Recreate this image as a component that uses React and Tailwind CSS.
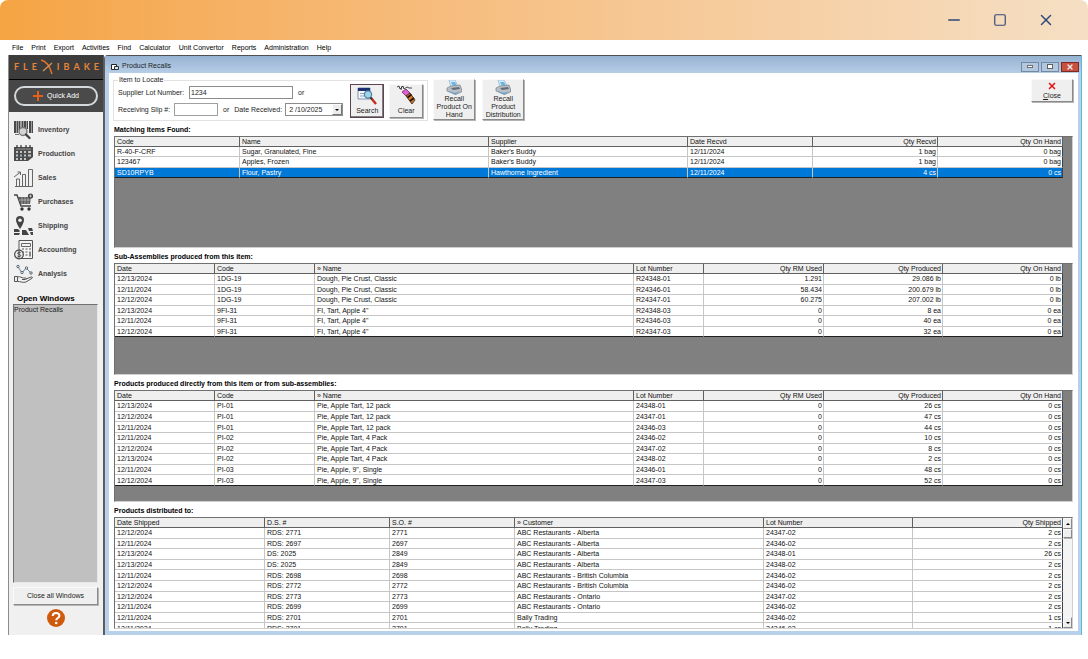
import { Minus, Square, X } from "lucide-react";

const menuItems = [
  "File",
  "Print",
  "Export",
  "Activities",
  "Find",
  "Calculator",
  "Unit Convertor",
  "Reports",
  "Administration",
  "Help",
];

const matchingItems = {
  columns: [
    { label: "Code", width: "w-[125px]" },
    { label: "Name", width: "w-[249px]" },
    { label: "Supplier" },
    { label: "Date Recvd", width: "w-[125px]" },
    { label: "Qty Recvd", width: "w-[125px]", right: true },
    { label: "Qty On Hand", width: "w-[125px]", right: true },
  ],
  rows: [
    ["R-40-F-CRF", "Sugar, Granulated, Fine", "Baker's Buddy", "12/11/2024", "1 bag", "0 bag"],
    ["123467", "Apples, Frozen", "Baker's Buddy", "12/11/2024", "1 bag", "0 bag"],
    ["SD10RPYB", "Flour, Pastry", "Hawthorne Ingredient", "12/11/2024", "4 cs", "0 cs"],
  ],
};

const productionColumns = [
  { label: "Date", width: "w-[100px]" },
  { label: "Code", width: "w-[100px]" },
  { label: "» Name" },
  { label: "Lot Number", width: "w-[70px]" },
  { label: "Qty RM Used", width: "w-[120px]", right: true },
  { label: "Qty Produced", width: "w-[119px]", right: true },
  { label: "Qty On Hand", width: "w-[120px]", right: true },
];

const subAssemblies = {
  columns: productionColumns,
  rows: [
    ["12/13/2024", "1DG-19", "Dough, Pie Crust, Classic", "R24348-01", "1.291", "29.086 lb", "0 lb"],
    ["12/11/2024", "1DG-19", "Dough, Pie Crust, Classic", "R24346-01", "58.434", "200.679 lb", "0 lb"],
    ["12/12/2024", "1DG-19", "Dough, Pie Crust, Classic", "R24347-01", "60.275", "207.002 lb", "0 lb"],
    ["12/13/2024", "9FI-31", "FI, Tart, Apple 4\"", "R24348-03", "0", "8 ea", "0 ea"],
    ["12/11/2024", "9FI-31", "FI, Tart, Apple 4\"", "R24346-03", "0", "40 ea", "0 ea"],
    ["12/12/2024", "9FI-31", "FI, Tart, Apple 4\"", "R24347-03", "0", "32 ea", "0 ea"],
  ],
};

const products = {
  columns: productionColumns,
  rows: [
    ["12/13/2024", "PI-01", "Pie, Apple Tart, 12 pack", "24348-01", "0", "26 cs", "0 cs"],
    ["12/12/2024", "PI-01", "Pie, Apple Tart, 12 pack", "24347-01", "0", "47 cs", "0 cs"],
    ["12/11/2024", "PI-01", "Pie, Apple Tart, 12 pack", "24346-03", "0", "44 cs", "0 cs"],
    ["12/11/2024", "PI-02", "Pie, Apple Tart, 4 Pack", "24346-02", "0", "10 cs", "0 cs"],
    ["12/12/2024", "PI-02", "Pie, Apple Tart, 4 Pack", "24347-02", "0", "8 cs", "0 cs"],
    ["12/13/2024", "PI-02", "Pie, Apple Tart, 4 Pack", "24348-02", "0", "2 cs", "0 cs"],
    ["12/11/2024", "PI-03", "Pie, Apple, 9\", Single", "24346-01", "0", "48 cs", "0 cs"],
    ["12/12/2024", "PI-03", "Pie, Apple, 9\", Single", "24347-03", "0", "52 cs", "0 cs"],
  ],
};

const distributed = {
  columns: [
    { label: "Date Shipped", width: "w-[150px]" },
    { label: "D.S. #", width: "w-[125px]" },
    { label: "S.O. #", width: "w-[125px]" },
    { label: "» Customer" },
    { label: "Lot Number", width: "w-[149px]" },
    { label: "Qty Shipped", width: "w-[150px]", right: true },
  ],
  rows: [
    ["12/12/2024", "RDS: 2771", "2771", "ABC Restaurants - Alberta", "24347-02", "2 cs"],
    ["12/11/2024", "RDS: 2697", "2697", "ABC Restaurants - Alberta", "24346-02", "2 cs"],
    ["12/13/2024", "DS: 2025", "2849", "ABC Restaurants - Alberta", "24348-01", "26 cs"],
    ["12/13/2024", "DS: 2025", "2849", "ABC Restaurants - Alberta", "24348-02", "2 cs"],
    ["12/11/2024", "RDS: 2698", "2698", "ABC Restaurants - British Columbia", "24346-02", "2 cs"],
    ["12/12/2024", "RDS: 2772", "2772", "ABC Restaurants - British Columbia", "24346-02", "2 cs"],
    ["12/12/2024", "RDS: 2773", "2773", "ABC Restaurants - Ontario", "24347-02", "2 cs"],
    ["12/11/2024", "RDS: 2699", "2699", "ABC Restaurants - Ontario", "24346-02", "2 cs"],
    ["12/11/2024", "RDS: 2701", "2701", "Bally Trading", "24346-02", "1 cs"],
    ["12/11/2024", "RDS: 2701", "2701", "Bally Trading", "24346-03", "1 cs"],
  ],
};

const InventoryIcon = () => (
  <svg viewBox="0 0 20 20" className="size-5">
    <g fill="#4a4a4a">
      <rect x="0" y="1" width="2" height="12" />
      <rect x="2.500" y="1" width="1.500" height="12" />
      <rect x="4.500" y="1" width="2" height="9" />
      <rect x="7.500" y="1" width="1.500" height="7" />
      <rect x="9.500" y="1" width="2.500" height="7" />
      <rect x="12.500" y="1" width="1.500" height="8" />
      <rect x="15" y="1" width="2" height="12" />
      <rect x="17.500" y="1" width="1.500" height="12" />
    </g>
    <path d="M1 14.500h4" stroke="#777" />
    <circle cx="9" cy="11.500" r="4" fill="#d4d4d4" stroke="#777" strokeWidth="1.400" />
    <path d="M12 14.500l3.500 3.500" stroke="#444" strokeWidth="2.400" strokeLinecap="round" />
  </svg>
);

const ProductionIcon = () => (
  <svg viewBox="0 0 20 20" className="size-5">
    <path d="M0 3h19v14H0z" fill="#4d4d4d" />
    <path d="M3 1v4M7 1v4M12 1v4M16 1v4" stroke="#333" strokeWidth="1.2" />
    <path d="M2 5h15" stroke="#999" />
    <path
      d="M2 7h2v2H2zM6 7h2v2H6zM10 7h2v2h-2zM14 7h3v2h-3zM2 10.500h2v2H2zM10 10.500h2v2h-2zM14 10.500h3v2h-3zM2 14h2v2H2zM6 14h2v2H6zM10 14h2v2h-2z"
      fill="#c4c4c4"
    />
    <path d="M6 10.500h2v2H6z" fill="#8fb2d0" />
    <path d="M14 17l5-4v4z" fill="#efefef" />
  </svg>
);

const SalesIcon = () => (
  <svg viewBox="0 0 20 20" className="size-5" fill="none" stroke="#666">
    <path d="M1 18.500h18M2.500 18v-7h3v7M8.500 18V6.500h3V18M14.500 18V1.500h4V18" />
    <path d="M0 9l6-4.500M3.500 4H6.500V7" />
  </svg>
);

const PurchasesIcon = () => (
  <svg viewBox="0 0 20 20" className="size-5">
    <path d="M0 3h3l4 11h10" fill="none" stroke="#444" strokeWidth="1.4" />
    <path d="M4 5h13l-1 7H6z" fill="#5c5c5c" />
    <path d="M8 5v7M11 5v7M14 5v7M5 8h12" stroke="#ccc" strokeWidth=".6" />
    <circle cx="16.500" cy="4" r="2.600" fill="#444" />
    <path d="M15 4h3M16.500 2.500v3" stroke="#ddd" strokeWidth=".7" />
    <circle cx="8" cy="17" r="1.700" fill="#333" />
    <circle cx="15" cy="17" r="1.700" fill="#333" />
  </svg>
);

const ShippingIcon = () => (
  <svg viewBox="0 0 20 20" className="size-5">
    <path d="M0 13h4l2 2-1 1H0zM0 17h6l-1 2H0zM8 14h4l3 5H8zM14 12h4l1 3h-4zM16 16h3v3h-2z" fill="#444" />
    <path d="M6 0a4 4 0 0 1 4 4c0 3-4 9-4 9S2 7 2 4a4 4 0 0 1 4-4z" fill="#444" />
    <circle cx="6" cy="4.200" r="1.800" fill="#f0f0f0" />
  </svg>
);

const AccountingIcon = () => (
  <svg viewBox="0 0 20 20" className="size-5">
    <path d="M5 .5h13.500v18H5z" fill="#f4f4f4" stroke="#555" />
    <path d="M7.500 3.500h9v3h-9z" fill="none" stroke="#666" />
    <path d="M8 9h2M11.500 9h2M15 9h2M8 12h2M11.500 12h2M11.500 15h2" stroke="#555" />
    <path d="M15 11.500h2v5h-2z" fill="#888" />
    <circle cx="5" cy="14.500" r="4.300" fill="#efefef" stroke="#444" strokeWidth="1.200" />
    <path
      d="M6.700 12.700c-1-1-3.200-.5-3 .7.200 1.200 3 .8 3 2.200 0 1.200-2.400 1.400-3.300.4M5 11.200v6.600"
      fill="none"
      stroke="#333"
      strokeWidth=".9"
    />
  </svg>
);

const AnalysisIcon = () => (
  <svg viewBox="0 0 20 20" className="size-5" fill="none">
    <path d="M4 3l4 6 4-5 5 5" stroke="#6c7c8a" />
    <g fill="#f0f0f0" stroke="#4f6577">
      <circle cx="4" cy="2.500" r="1.200" />
      <circle cx="8" cy="8.500" r="1.200" />
      <circle cx="12.500" cy="4" r="1.200" />
      <circle cx="17" cy="9" r="1.200" />
    </g>
    <path
      d="M.5 12.500h3v5h-3zM3.500 13c3-1 4 1 6 1h2c1 0 1 1.500 0 1.500H8M12 15l5-2c1.500-.3 2 .7 1 1.300L12 18c-3 1-6-.5-8.500-.7"
      stroke="#555"
    />
  </svg>
);

const SearchIcon = () => (
  <svg viewBox="0 0 20 18" className="h-[18px] w-5">
    <path d="M1 1h12v11H1z" fill="#f4f8fc" stroke="#7d93ad" />
    <path d="M1 1h12v3H1z" fill="#1b2f72" />
    <path d="M3 6.500h7M3 9h5" stroke="#94a4b8" />
    <circle cx="11" cy="7.500" r="3.600" fill="#9fd4ee" stroke="#4f7f9c" strokeWidth="1.200" />
    <path d="M14 11l5 6" stroke="#c62a1c" strokeWidth="2.400" />
    <path d="M13.500 10.500l1.500 1.500" stroke="#333" strokeWidth="2" />
  </svg>
);

const ClearIcon = () => (
  <svg viewBox="0 0 20 20" className="size-5">
    <path d="M1 2l2-1 1 3 3-3 1 3 3-2 2 1 3 0M5 5l1-4" fill="none" stroke="#333" strokeWidth=".9" />
    <path d="M6 7l4-3 4 4-4 3z" fill="#dd5fd0" stroke="#6b2266" strokeWidth=".8" />
    <path d="M14 8l5 7-3 4-6-8z" fill="#d07a2c" stroke="#40220c" strokeWidth=".8" />
    <path d="M11.500 12.500l4-3M14 16l4-3" stroke="#1d120a" strokeWidth="1.600" />
  </svg>
);

const PrinterIcon = () => (
  <svg viewBox="0 0 16 15" className="h-[15px] w-4">
    <path d="M3 0l6-0 3 6-7 1z" fill="#d5ecfa" stroke="#8db6d2" strokeWidth=".7" />
    <path d="M5 2l4 0 1.500 3-4 .5z" fill="#6cb4e2" />
    <path d="M1 8l4-2 9-1 1.500 4v3l-6 2.500L1 11z" fill="#b9bfc6" stroke="#777f88" strokeWidth=".7" />
    <path d="M5 8l8-1 1 2-7 1z" fill="#646c76" />
    <path d="M2 11l7 2 5-2-5 3.500z" fill="#5d9fd0" />
  </svg>
);

const modules = [
  { label: "Inventory", Icon: InventoryIcon },
  { label: "Production", Icon: ProductionIcon },
  { label: "Sales", Icon: SalesIcon },
  { label: "Purchases", Icon: PurchasesIcon },
  { label: "Shipping", Icon: ShippingIcon },
  { label: "Accounting", Icon: AccountingIcon },
  { label: "Analysis", Icon: AnalysisIcon },
];

const raised =
  "border border-t-[#fafafa] border-l-[#fafafa] border-r-[#8a8a8a] border-b-[#8a8a8a] bg-[#efefef] shadow-[1px_1px_0_#b4b4b4]";

const Logo = () => (
  <div
    role="img"
    aria-label="Flexibake"
    className="flex h-[25px] items-center justify-between border-b border-black bg-[#3c3c3c] pr-1 pl-[5px] font-['Lato'] text-[9px] font-bold text-[#e8843a]"
  >
    <span>F</span>
    <span>L</span>
    <span>E</span>
    <svg viewBox="0 0 12 16" className="h-4 w-3" fill="none">
      <path d="M0 1c5 1 9 7 11 14" stroke="#e8762a" strokeWidth="1.400" />
      <path d="M11 4L2 12" stroke="#d9924f" strokeWidth="1.300" />
    </svg>
    <span>I</span>
    <span>B</span>
    <span>A</span>
    <span>K</span>
    <span>E</span>
  </div>
);

const Sidebar = () => (
  <aside className="flex w-24 shrink-0 flex-col border-r border-l border-r-[#5a5a5a] border-l-[#8c8c8c] bg-[#f0f0f0]">
    <Logo />
    <div className="bg-[#474747] px-[5px] py-1.5">
      <button
        type="button"
        className="flex h-5 w-full items-center justify-center gap-1 rounded-full border-2 border-[#d3d9dc] bg-[#4a4a4a] text-[7px] text-white"
      >
        <svg viewBox="0 0 10 10" className="size-2.5">
          <path d="M5 0v10M0 5h10" stroke="#e2601a" strokeWidth="2" />
        </svg>
        Quick Add
      </button>
    </div>
    <nav className="flex flex-col pt-1.5 pl-[5px]">
      {modules.map(({ label, Icon }) => (
        <a
          key={label}
          href="#"
          className="flex h-6 items-center gap-1 text-[7px] font-bold text-[#444444]"
        >
          <Icon />
          {label}
        </a>
      ))}
    </nav>
    <h2 className="mt-2 pl-2 text-[8px] leading-[10px] font-bold text-black">Open Windows</h2>
    <ul className="mr-[5px] ml-1 flex-1 border border-t-[#707070] border-r-[#e8e8e8] border-b-[#e8e8e8] border-l-[#707070] bg-[#c0c0c0] text-[7px] leading-[10px] text-[#222222]">
      <li>Product Recalls</li>
    </ul>
    <button type="button" className={`mt-1 mr-[5px] ml-1 h-[18px] text-[7px] text-[#222222] ${raised}`}>
      Close all Windows
    </button>
    <button type="button" aria-label="Help" className="mt-1 mb-2 self-center">
      <svg viewBox="0 0 18 18" className="size-[18px]">
        <circle cx="9" cy="9" r="9" fill="#cf5a0c" />
        <path d="M5.800 7c0-4 6.600-4 6.600-.3 0 2.300-3.200 2.300-3.200 4.600" fill="none" stroke="#fff" strokeWidth="2.100" />
        <circle cx="9.200" cy="14" r="1.300" fill="#fff" />
      </svg>
    </button>
  </aside>
);

const TitleBar = () => (
  <div className="flex h-[17px] items-center gap-[3px] bg-linear-to-b from-[#96b3d2] to-[#b7cde7] pt-1 pr-0.5 pl-1.5 text-[7px] text-[#1c1c1c]">
    <svg viewBox="0 0 8 8" className="size-2">
      <path d="M.5 1.500h5v5h-5z" fill="#fff" stroke="#222" />
      <path d="M3.500 3.500h4v3h-4z" fill="#cfe6f5" stroke="#333" />
    </svg>
    <h1 className="flex-1">Product Recalls</h1>
    <div className="flex gap-0.5">
      <button
        type="button"
        aria-label="Minimize window"
        className="flex h-2.5 w-[18px] items-center justify-center border border-[#7189a5] bg-[#b3c8df]"
      >
        <span className="h-[3px] w-1.5 border border-[#707070] bg-white" />
      </button>
      <button
        type="button"
        aria-label="Restore window"
        className="flex h-2.5 w-[18px] items-center justify-center border border-[#7189a5] bg-[#b3c8df]"
      >
        <span className="h-[5px] w-1.5 border border-[#606060] bg-white" />
      </button>
      <button
        type="button"
        aria-label="Close window"
        className="flex h-2.5 w-[18px] items-center justify-center border border-[#7a2b22] bg-[#c9503f]"
      >
        <X className="size-2 text-[#ececec]" strokeWidth={4} />
      </button>
    </div>
  </div>
);

const LocateForm = () => (
  <form className="flex items-start pt-[3px] pr-[5px] pl-1 text-[7px] leading-[8px] text-[#1c1c1c]">
    <fieldset className="flex border border-[#e2e2e2] pr-1 pb-0.5 pl-1">
      <legend className="px-px">Item to Locate</legend>
      <div className="flex gap-[7px]">
        <div className="flex flex-col gap-1 pt-0.5">
          <div className="flex items-center">
            <label htmlFor="supplier-lot" className="w-[71px]">
              Supplier Lot Number:
            </label>
            <input
              id="supplier-lot"
              defaultValue="1234"
              className="h-[13px] w-[104px] border border-[#8c8c8c] bg-white px-px text-[7px]"
            />
            <span className="pl-[5px]">or</span>
          </div>
          <div className="flex items-center">
            <label htmlFor="receiving-slip" className="w-14">
              Receiving Slip #:
            </label>
            <input
              id="receiving-slip"
              className="h-[13px] w-11 border border-[#a0a0a0] bg-white px-px text-[7px]"
            />
            <span className="px-[5px]">or</span>
            <label htmlFor="date-received" className="w-[51px]">
              Date Received:
            </label>
            <div className="relative">
              <select
                id="date-received"
                className="block h-[13px] w-[58px] appearance-none border border-[#8c8c8c] bg-white pl-[3px] text-[7px]"
              >
                <option>2 /10/2025</option>
              </select>
              <span className="pointer-events-none absolute inset-y-px right-px flex w-2.5 items-center justify-center border border-t-white border-r-[#777777] border-b-[#777777] border-l-white bg-[#ececec]">
                <svg viewBox="0 0 4 2" className="h-0.5 w-1">
                  <path d="M0 0h4L2 2z" />
                </svg>
              </span>
            </div>
          </div>
        </div>
        <div className="flex gap-[5px]">
          <button
            type="submit"
            className="flex h-[34px] w-[34px] flex-col items-center justify-between border border-[#5e4450] bg-[#efefef] pt-0.5 pb-0.5 shadow-[inset_-1px_-1px_0_#808080]"
          >
            <SearchIcon />
            Search
          </button>
          <button
            type="reset"
            className={`flex h-[34px] w-[34px] flex-col items-center justify-between pb-0.5 ${raised}`}
          >
            <ClearIcon />
            Clear
          </button>
        </div>
      </div>
    </fieldset>
    <div className="mt-[3px] ml-[5px] flex flex-1 gap-[7px]">
      <button type="button" className={`flex h-[41px] w-[42px] flex-col items-center ${raised}`}>
        <PrinterIcon />
        Recall
        <br />
        Product On
        <br />
        Hand
      </button>
      <button type="button" className={`flex h-[41px] w-[42px] flex-col items-center ${raised}`}>
        <PrinterIcon />
        Recall
        <br />
        Product
        <br />
        Distribution
      </button>
    </div>
    <button
      type="button"
      className={`mt-[3px] flex h-[23px] w-[42px] flex-col items-center justify-center gap-px ${raised}`}
    >
      <X className="h-2.5 w-2.5 text-[#e01818]" strokeWidth={4} />
      <span>
        <u>C</u>lose
      </span>
    </button>
  </form>
);

const ScrollBar = () => (
  <div className="flex w-[9px] flex-col self-stretch bg-[#f4f4f4]">
    <button type="button" aria-label="Scroll up" className={`flex h-[11px] items-center justify-center ${raised}`}>
      <svg viewBox="0 0 4 2" className="h-0.5 w-1">
        <path d="M0 2h4L2 0z" />
      </svg>
    </button>
    <div className={`h-[9px] ${raised}`} />
    <button
      type="button"
      aria-label="Scroll down"
      className={`mt-auto flex h-[11px] items-center justify-center ${raised}`}
    >
      <svg viewBox="0 0 4 2" className="h-0.5 w-1">
        <path d="M0 0h4L2 2z" />
      </svg>
    </button>
  </div>
);

const Grid = ({ title, data, height, selected, scroll }) => (
  <section className="flex min-h-[127px] flex-1 flex-col">
    <h2 className="h-[15px] pt-1 text-[7px] leading-[10px] font-bold text-black">{title}</h2>
    <div className="flex h-0 grow items-start overflow-hidden border border-t-[#707070] border-r-[#d0d0d0] border-b-[#d0d0d0] border-l-[#707070] bg-[#808080]">
      <table
        className={`flex-1 table-fixed border-separate border-spacing-0 text-left text-[7px] leading-[9px] whitespace-nowrap text-[#111111] ${height}`}
      >
        <thead>
          <tr className="bg-[#efefef]">
            {data.columns.map((column) => (
              <th
                key={column.label}
                className={`border-r border-b border-[#606060] py-0 font-normal ${
                  column.right ? "px-px text-right" : "px-0.5 text-left"
                } ${column.width ?? ""}`}
              >
                {column.label}
              </th>
            ))}
          </tr>
        </thead>
        <tbody>
          {data.rows.map((row, rowIndex) => (
            <tr
              key={rowIndex}
              className={`last:*:border-b-[#202020] ${
                rowIndex === selected ? "bg-[#0078d7] text-white" : "bg-white"
              }`}
            >
              {row.map((cell, index) => (
                <td
                  key={index}
                  className={`border-r border-b border-[#c6c6c6] py-0 last:border-r-[#404040] ${
                    data.columns[index].right ? "px-px text-right" : "px-0.5"
                  }`}
                >
                  {cell}
                </td>
              ))}
            </tr>
          ))}
        </tbody>
      </table>
      {scroll ? <ScrollBar /> : <div className="w-[9px] shrink-0" />}
    </div>
  </section>
);

const App = () => {
  return (
    <div className="flex min-h-screen flex-col bg-white pb-6 font-['Liberation_Sans',sans-serif]">
      <header className="flex h-10 items-center justify-end gap-7 rounded-t-lg bg-linear-to-r from-[#f5a442] to-[#f5dfc4] pr-[33px] text-[#2f4777]">
        <button type="button" aria-label="Minimize">
          <Minus className="size-[18px]" strokeWidth={2} />
        </button>
        <button type="button" aria-label="Maximize" className="flex w-[18px] justify-center">
          <Square className="size-3.5" strokeWidth={2} />
        </button>
        <button type="button" aria-label="Close">
          <X className="size-[18px]" strokeWidth={2} />
        </button>
      </header>

      <nav className="flex h-[15px] items-center gap-2 pt-px pl-3 text-[7px] text-black">
        {menuItems.map((item) => (
          <a key={item} href="#">
            {item}
          </a>
        ))}
      </nav>

      <div className="flex flex-1 pr-1.5 pl-2">
        <Sidebar />
        <main className="flex min-w-0 flex-1 flex-col rounded-tl-sm border-t border-r border-l border-t-[#505050] border-r-[#59b9e0] border-l-[#606060] bg-[#b9d0ea]">
          <TitleBar />
          <div className="mr-[3px] mb-1 ml-1 flex flex-1 flex-col bg-white">
            <LocateForm />
            <div className="flex flex-1 flex-col pr-[5px] pb-0.5 pl-[5px]">
              <Grid title="Matching Items Found:" data={matchingItems} height="h-[41px]" selected={2} />
              <Grid title="Sub-Assemblies produced from this item:" data={subAssemblies} height="h-[73px]" />
              <Grid
                title="Products produced directly from this item or from sub-assemblies:"
                data={products}
                height="h-[95px]"
              />
              <Grid title="Products distributed to:" data={distributed} height="h-[116px]" scroll />
            </div>
          </div>
        </main>
      </div>
    </div>
  );
};

export default App;
